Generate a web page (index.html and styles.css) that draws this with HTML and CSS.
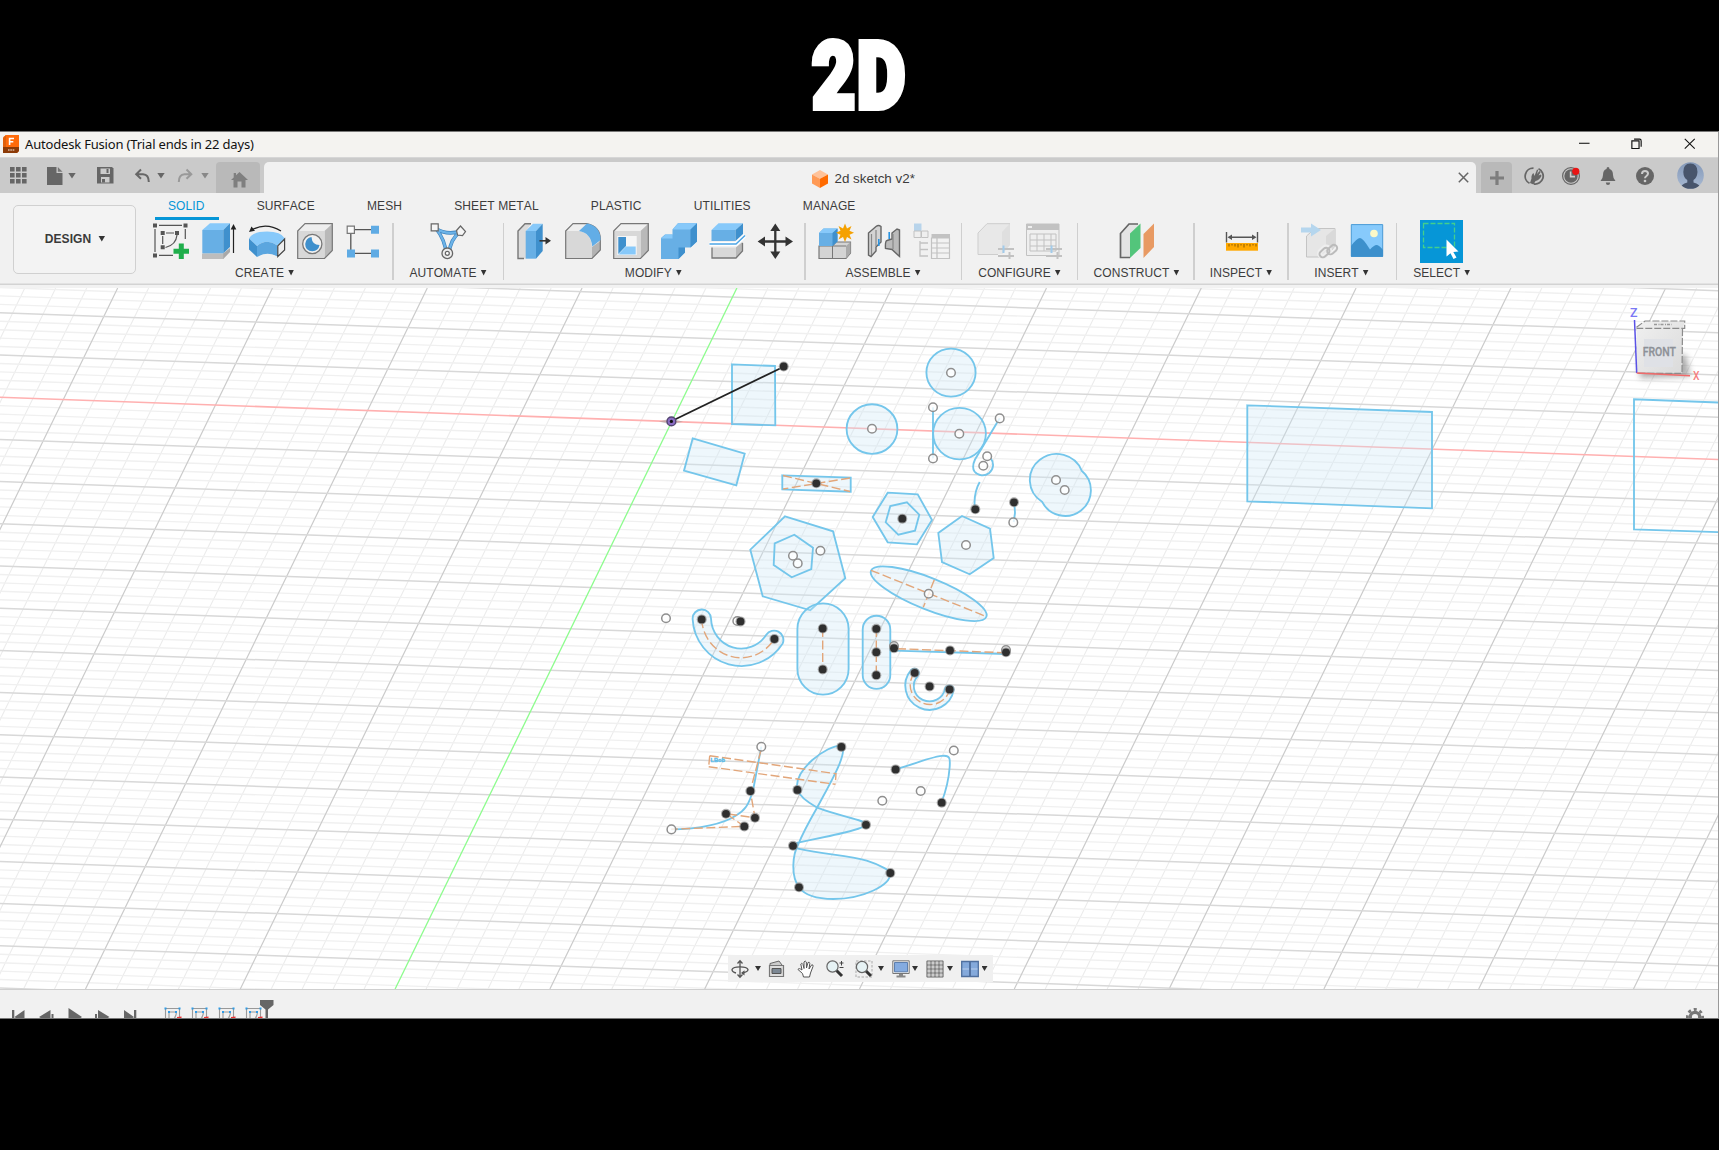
FILE: index.html
```html
<!DOCTYPE html>
<html lang="en">
<head>
<meta charset="utf-8">
<title>Autodesk Fusion</title>
<link rel="stylesheet" href="styles.css">
</head>
<body>
<header class="banner"><h1 class="banner-title">2D</h1></header>
<main class="window">
  <div class="titlebar">
    <svg class="app-logo" viewBox="0 0 16 18"><path d="M1 1.5L3 0H16V16L14 18H0V3z" fill="#ff6b0b"/><path d="M0 12H16V16L14 18H0z" fill="#8c3a06"/><path d="M0 3L3 0V12H0z" fill="#e0600c"/><path d="M6.6 10V3.5H11M6.6 6.7H10.3" stroke="#fff" stroke-width="1.6" fill="none"/><path d="M5 15H12" stroke="#d9b9a4" stroke-width="1.6" stroke-dasharray="1.6 .7"/></svg>
    <span class="app-title">Autodesk Fusion (Trial ends in 22 days)</span>
    <div class="window-buttons">
      <svg viewBox="0 0 12 12"><path d="M0 5.5H11" stroke="#111" stroke-width="1.1"/></svg>
      <svg viewBox="0 0 12 12"><path d="M.9 3H8.4V11H.9z" fill="none" stroke="#111" stroke-width="1.2"/><path d="M3.2 1.2H9Q10.6 1.2 10.6 3V9" fill="none" stroke="#111" stroke-width="1.2"/></svg>
      <svg viewBox="0 0 12 12"><path d="M.8.8L11.2 11.2M11.2.8L.8 11.2" stroke="#111" stroke-width="1.1"/></svg>
    </div>
  </div>

  <div class="tabstrip">
    <div class="quick">
      <svg class="q-apps" viewBox="0 0 17 17" fill="#666"><path d="M0 0h4.6v4.6H0zM6 0h4.6v4.6H6zM12 0h4.6v4.6H12zM0 6h4.6v4.6H0zM6 6h4.6v4.6H6zM12 6h4.6v4.6H12zM0 12h4.6v4.6H0zM6 12h4.6v4.6H6zM12 12h4.6v4.6H12z"/></svg>
      <svg class="q-file" viewBox="0 0 16 18"><path d="M0 0H9.5V6H15.5V18H0z" fill="#666"/><path d="M10.8 0L15.5 4.8H10.8z" fill="#777"/></svg>
      <i class="caret q-c1"></i>
      <svg class="q-save" viewBox="0 0 17 17"><path d="M0 0H15L16.5 1.5V16.5H0z" fill="#666"/><path d="M3.5 1.5H13V7H3.5z" fill="#ccc"/><path d="M9.5 2V6H11.5V2z" fill="#666"/><path d="M4 10H12.5V15.5H4z" fill="#ccc"/><path d="M5 12H8V15.5H5z" fill="#666"/></svg>
      <svg class="q-undo" viewBox="0 0 16 14"><path d="M6 .5L1.2 5.2L6 9.8M1.5 5.2H8Q13.8 5.5 13.8 13" fill="none" stroke="#666" stroke-width="2"/></svg>
      <i class="caret q-c2"></i>
      <svg class="q-redo" viewBox="0 0 16 14"><path d="M9.5 .5L14.3 5.2L9.5 9.8M14 5.2H7.5Q1.8 5.5 1.8 13" fill="none" stroke="#999" stroke-width="2"/></svg>
      <i class="caret q-c3"></i>
    </div>
    <div class="home-tab"><svg viewBox="0 0 17 16"><path d="M8.5 0L17 8H14.5V15.5H10.5V9.5H6.5V15.5H2.5V8H0L2.7 5.4V1H5V3.3z" fill="#7f7f7f"/></svg></div>
    <div class="doc-tab">
      <svg class="doc-cube" viewBox="0 0 16 18"><path d="M8 0L16 4.4L8 8.8L0 4.4z" fill="#ffc299"/><path d="M0 4.4L8 8.8V18L0 13.6z" fill="#ff9a55"/><path d="M16 4.4L8 8.8V18L16 13.6z" fill="#ff6a00"/></svg>
      <span>2d sketch v2*</span>
      <svg class="doc-close" viewBox="0 0 11 11"><path d="M.8.8L10.2 10.2M10.2.8L.8 10.2" stroke="#666" stroke-width="1.5"/></svg>
    </div>
    <div class="new-tab"><svg viewBox="0 0 14 14"><path d="M7 0V14M0 7H14" stroke="#7d7d7d" stroke-width="3.2"/></svg></div>
    <div class="account">
      <svg class="a-ic" viewBox="0 0 18 18"><path d="M4.500 16.300A8 8 0 0 1 8.500 1.200M13.500 1.800A8 8 0 0 1 9 17" fill="none" stroke="#666" stroke-width="1.800"/><path d="M5 16L6.500 11.500Q6 8 8.500 6L9.500 9L12 2.500L13.200 3L12 7L14.500 4L15.700 5L13.500 8.500L16 7.500L16.500 9Q14 13.500 10.500 14L8.500 17.500z" fill="#666"/></svg>
      <svg class="a-ic" viewBox="0 0 18 18"><circle cx="9" cy="9" r="8.4" fill="none" stroke="#666" stroke-width="1.2"/><circle cx="9" cy="9" r="6.7" fill="#666"/><path d="M8.6 4.5V9.6H13" stroke="#ccc" stroke-width="1.6" fill="none"/><circle cx="13.8" cy="4.3" r="3.6" fill="#e81414"/></svg>
      <svg class="a-ic" viewBox="0 0 18 18"><path d="M9 0Q10.5 0 10.5 2Q14 3 14 8Q14 11.5 16.5 14H1.5Q4 11.5 4 8Q4 3 7.5 2Q7.5 0 9 0zM6.8 15.5H11.2Q11 18 9 18Q7 18 6.8 15.5z" fill="#666"/></svg>
      <svg class="a-ic" viewBox="0 0 18 18"><circle cx="9" cy="9" r="9" fill="#666"/><path d="M6 7Q6 4 9 4Q12 4 12 6.6Q12 8 10.5 9Q9 10 9 11.3" fill="none" stroke="#ccc" stroke-width="2"/><circle cx="9" cy="14" r="1.3" fill="#ccc"/></svg>
      <svg class="avatar" viewBox="0 0 27 27"><defs><clipPath id="av"><circle cx="13.5" cy="13.5" r="13.3"/></clipPath><linearGradient id="avg" x2="0" y2="1"><stop stop-color="#8398b8"/><stop offset="1" stop-color="#a9bad3"/></linearGradient></defs><g clip-path="url(#av)"><path d="M0 0H27V27H0z" fill="url(#avg)"/><path d="M13.3 1.5Q20.5 1.5 20.5 10Q20 16 16.5 18V20.5Q23 22 24.5 27H2.5Q4 22 10.3 20.5V18Q6.5 16 6.3 10Q6.3 1.5 13.3 1.5z" fill="#48556c"/></g></svg>
    </div>
  </div>

  <section class="ribbon">
    <button class="design">DESIGN <i class="caret"></i></button>
    <div class="ribbon-main">
      <nav class="ribbon-tabs"><span class="active">SOLID</span><span>SURFACE</span><span>MESH</span><span>SHEET METAL</span><span>PLASTIC</span><span>UTILITIES</span><span>MANAGE</span></nav>
      <div class="groups">
        <div class="group g-create"><div class="icons">
          <svg viewBox="0 0 36 40"><path d="M6 4.3H29M2 8V31M6 34.3H20M32.3 8V18M13 12H21M9.7 15V23M24 14Q23 24 12.5 26.5" stroke="#555" stroke-width="1.2" fill="none"/><path d="M0 2.5h4v4H0zM30.5 2.5h4v4h-4zM0 32.5h4v4H0zM7.7 10h4v4h-4zM22 10h4v4h-4zM7.7 24.3h4v4h-4z" fill="#555"/><path d="M28.3 22.5V38M20.5 30.3H36" stroke="#1fae4b" stroke-width="5"/></svg>
          <svg viewBox="0 0 36 40"><path d="M1.3 32.5H22L29 27V31L22.3 38H1.3z" fill="#a8a8a8"/><path d="M1.3 33H22.3V38H1.3z" fill="#bdbdbd"/><path d="M1.3 9L9 2.3H29L22.3 9z" fill="#87c9fa"/><path d="M1.3 9H22.3V32.3H1.3z" fill="#67afe5"/><path d="M22.3 9L29 2.3V26L22.3 32.3z" fill="#3f90cd"/><path d="M32.5 7V32" stroke="#222" stroke-width="1.2"/><path d="M32.5 3L35.3 8.5H29.7z" fill="#222"/></svg>
          <svg viewBox="0 0 36 40"><path d="M2.5 9Q17 .8 32 10" fill="none" stroke="#222" stroke-width="1.2"/><path d="M0 11L2.5 5.6L6 9.8z" fill="#222"/><path d="M0 17.500Q4 10.500 18 10.500Q32 10.500 36 17.500L28.5 24.5Q18 17 8 25z" fill="#87c9fa"/><path d="M8 25Q18 17 28.5 24.5V35.5Q18 30 8 36z" fill="#5ba6df"/><path d="M0 17.500L8 25V36L0 28.5z" fill="#3f90cd"/><path d="M28.8 24.8L35.6 18V29L28.8 35.5z" fill="#eee" stroke="#444" stroke-width="1.2"/></svg>
          <svg viewBox="0 0 36 40"><path d="M.7 10L8 2.7H35.3V29.5L27.5 37.5H.7z" fill="#eee"/><path d="M27.5 10L35.3 2.7V29.5L27.5 37.5z" fill="#b9b9b9"/><path d="M.7 10H27.5V37.5H.7z" fill="#d8d8d8"/><path d="M.7 10L8 2.7H35.3V29.5L27.5 37.5H.7z" fill="none" stroke="#777" stroke-width="1.2"/><circle cx="15.3" cy="23" r="9.6" fill="#f2f2f2" stroke="#777" stroke-width="1.3"/><path d="M14.5 16Q15 24 22.5 24Q21.5 30 15.3 30.2Q8.2 30 8.2 23Q8.8 17 14.5 16z" fill="#3f90cd"/></svg>
          <svg viewBox="0 0 36 40"><path d="M10 8.7H26M5.8 13V29M10 32.3H26" stroke="#555" stroke-width="1.3"/><path d="M2.2 5.1h7.2v7.2H2.2z" fill="#fafafa" stroke="#777" stroke-width="1.2"/><path d="M26 4.8h8v8h-8zM2 28.4h8v8H2zM26 28.4h8v8h-8z" fill="#5fabe4"/></svg>
        </div><div class="label">CREATE<i class="caret"></i></div></div>
        <div class="group g-auto"><div class="icons">
          <svg viewBox="0 0 36 40"><path d="M5 6Q16 20 16 33M31 10Q20 18 19 33M5 7Q17 15 31 10" fill="none" stroke="#3b82bd" stroke-width="3.6"/><path d="M5 6Q16 20 16 33M31 10Q20 18 19 33M5 7Q17 15 31 10" fill="none" stroke="#6cb3e8" stroke-width="2.2"/><path d="M1.2 2.8h7v7h-7z" fill="#f5f5f5" stroke="#666" stroke-width="1.2"/><path d="M26.5 9.5L30.5 5L35.5 10.5L32.5 14.5L27.5 14z" fill="#f5f5f5" stroke="#666" stroke-width="1.2"/><circle cx="17.3" cy="32.3" r="5.3" fill="#eee" stroke="#666" stroke-width="1.3"/><circle cx="17.3" cy="32.3" r="2" fill="#fff" stroke="#666" stroke-width="1.2"/></svg>
        </div><div class="label">AUTOMATE<i class="caret"></i></div></div>
        <div class="group g-modify"><div class="icons">
          <svg viewBox="0 0 36 40"><path d="M1 10L8 2.7H14L9 10V37.5H1z" fill="#dcdcdc"/><path d="M14 2.7H8L1 10V37.5H7" fill="none" stroke="#777" stroke-width="1.4"/><path d="M8.7 10L16 2.7H25.7L19 10z" fill="#87c9fa"/><path d="M8.7 10H19V37.7H8.7z" fill="#67afe5"/><path d="M19 10L25.7 2.7V30L19 37.7z" fill="#3f90cd"/><path d="M22.5 19.8H29" stroke="#333" stroke-width="1.6"/><path d="M28.5 16L34 19.8L28.5 23.6z" fill="#333"/></svg>
          <svg viewBox="0 0 36 40"><path d="M.7 10L8 2.7H22Q35.3 6 35.3 18V29L27 37.5H.7z" fill="#eee"/><path d="M.7 10H14Q26 12 27 26V37.5H.7z" fill="#d8d8d8"/><path d="M27 26L35.3 20V29L27 37.5z" fill="#b3b3b3"/><path d="M.7 10L8 2.7H22Q35.3 6 35.3 18V29L27 37.5H.7z" fill="none" stroke="#777" stroke-width="1.2"/><path d="M14 10L22 2.4Q35.6 5 35.6 19L27.3 25.5Q26 12 14 10z" fill="#62ade6"/></svg>
          <svg viewBox="0 0 36 40"><path d="M.7 10L8 2.7H35.3V29.5L27.5 37.5H.7z" fill="#f0f0f0"/><path d="M27.5 10L35.3 2.7V29.5L27.5 37.5z" fill="#b9b9b9"/><path d="M.7 10H27.5V37.5H.7z" fill="#d8d8d8"/><path d="M.7 10L8 2.7H35.3V29.5L27.5 37.5H.7z" fill="none" stroke="#777" stroke-width="1.2"/><path d="M4.3 15H23.7V34H4.3z" fill="#f6f6f6"/><path d="M5.3 16H13V25L5.3 33z" fill="#3f90cd"/><path d="M5.3 33.5L13 25.5H22.7V33.5z" fill="#87c9fa"/></svg>
          <svg viewBox="0 0 36 40"><path d="M0 17L4 13.5H11.5V8.5L17 2.3H36V20.5L29.5 26.5H24V31.5L17.5 38H0z" fill="#67afe5"/><path d="M11.5 8.5L17 2.3H36L29.5 8.5zM0 17.5L4.5 13.5H11.5V17.5z" fill="#87c9fa"/><path d="M29.5 8.5L36 2.3V20.5L29.5 26.5zM17.5 26.5H24V31.5L17.5 38z" fill="#3f90cd"/></svg>
          <svg viewBox="0 0 36 40"><path d="M2.5 9L9.5 2.3H34L26.5 9z" fill="#87c9fa"/><path d="M2.5 9H26.5V20H2.5z" fill="#67afe5"/><path d="M26.5 9L34 2.3V13L26.5 20z" fill="#3f90cd"/><path d="M3 26.5H27L33.5 21V30L27 37H3z" fill="#d8d8d8"/><path d="M27 26.5L33.5 21V30L27 37z" fill="#b9b9b9"/><path d="M3 26.5V37H27L33.5 30V22" fill="none" stroke="#777" stroke-width="1.3"/><path d="M.5 23H27L36 14.5" fill="none" stroke="#fff" stroke-width="4"/><path d="M.5 23H27L36 14.5" fill="none" stroke="#4ea6e6" stroke-width="1.5"/></svg>
          <svg viewBox="0 0 36 40"><path d="M18.3 7V34M5 20.5H31" stroke="#333" stroke-width="2.3"/><path d="M18.3 2.5L23.3 10H13.3zM18.3 38L23.3 30.5H13.3zM.6 20.5L8 15.5V25.5zM36 20.5L28.5 15.5V25.5z" fill="#333"/></svg>
        </div><div class="label">MODIFY<i class="caret"></i></div></div>
        <div class="group g-assemble"><div class="icons">
          <svg viewBox="0 0 36 40"><path d="M1 25H14.5L18 21H32.5V32L28 37.5H1z" fill="#d4d4d4" stroke="#777" stroke-width="1.2"/><path d="M28 25L32.5 21V32L28 37.5z" fill="#aaa"/><path d="M14.5 25H28M14.5 25V37.5" stroke="#777"/><path d="M1 12L5.5 7.5H19.5V20.5L14.5 25H1z" fill="#67afe5"/><path d="M1 12L5.5 7.5H19.5L14.5 12z" fill="#87c9fa"/><path d="M14.5 12L19.5 7.5V20.5L14.5 25z" fill="#3f90cd"/><path d="M27 2.5L29 7.5L33.5 5L31.5 9.7L36 11.7L31.5 13.7L33.5 18.5L29 16L27 21L25 16L20.5 18.5L22.5 13.7L18 11.7L22.5 9.7L20.5 5L25 7.5z" fill="#f5a100"/></svg>
          <svg viewBox="0 0 36 40"><path d="M2.5 12L10 5.500Q12.500 3.500 15 5.500V21L10 26V30L5 35.500L2.500 34z" fill="#d4d4d4" stroke="#666" stroke-width="1.4"/><path d="M5.500 13V34M10 9V25" stroke="#888" stroke-width="1.2"/><path d="M33.500 9L31 8L26 12V18L21 19.500Q19 20 19.500 27.500L26 28.500L33.500 35.500z" fill="#bbb" stroke="#666" stroke-width="1.4"/><path d="M27 13V28" stroke="#888" stroke-width="1.200"/><path d="M12.800 18V25M23.200 11V18" stroke="#2a93e0" stroke-width="1.6"/></svg>
          <svg class="dim" viewBox="0 0 36 40"><path d="M0 2.5h7.5V10H0z" fill="#9ac6e8"/><path d="M0 10h7v6.5H0zM7.5 10h6.500v6.500H7.500z" fill="#eee" stroke="#aaa"/><path d="M6 20V35H14M6 22H14M6 28.500H14" fill="none" stroke="#aaa" stroke-width="1.300"/><path d="M17.500 13H36V17H17.500z" fill="#aaa"/><path d="M17.500 17H35.500V37.500H17.500zM17.500 22H35.500M17.500 27H35.500M17.500 32H35.500M23 17V37.500" fill="#f3f3f3" stroke="#aaa" stroke-width="1.200"/></svg>
        </div><div class="label">ASSEMBLE<i class="caret"></i></div></div>
        <div class="group g-configure"><div class="icons">
          <svg class="dim" viewBox="0 0 36 40"><path d="M0 12L9 2.500H32V24L24 33H0z" fill="#e4e4e4"/><path d="M24 11L32 2.500V24L24 33z" fill="#d6d6d6"/><path d="M20 33.500H0V12L9 2.700H32" fill="none" stroke="#bbb" stroke-width="1"/><path d="M20 28H36M20 35H36M31.500 31V38" stroke="#aaa" stroke-width="2"/><path d="M25.500 24.500V32" stroke="#79b8e8" stroke-width="2"/></svg>
          <svg class="dim" viewBox="0 0 36 40"><path d="M.5 3H33V34.500H.5z" fill="#eee" stroke="#aaa"/><path d="M.5 3H33V9H.5z" fill="#aaa"/><path d="M2 5h4v2H2z" fill="#eee"/><path d="M4 13H30V30H4zM4 19H30M4 25H30M11 13V30M18 13V30M25 13V25" fill="none" stroke="#aaa"/><path d="M20 28H36M20 35H36M31.500 31V38" stroke="#aaa" stroke-width="2"/><path d="M25.500 24.500V32" stroke="#79b8e8" stroke-width="2"/></svg>
        </div><div class="label">CONFIGURE<i class="caret"></i></div></div>
        <div class="group g-construct"><div class="icons">
          <svg viewBox="0 0 36 40"><path d="M1.500 12.500L10 3H20L12 12.500V36.500H1.500z" fill="#e4e4e4"/><path d="M19 3H10L1.500 12.500V36.500H11" fill="none" stroke="#666" stroke-width="1.700"/><path d="M11 12.500L21.500 2.500V27L11 37z" fill="#53c57b"/><path d="M24.500 13L35 2.500V26L24.500 37z" fill="#e89a63"/></svg>
        </div><div class="label">CONSTRUCT<i class="caret"></i></div></div>
        <div class="group g-inspect"><div class="icons">
          <svg viewBox="0 0 36 40"><path d="M2.500 11V21.500M33.500 11V21.500M6 16.300H30" stroke="#555" stroke-width="1.400"/><path d="M3.500 16.300L8 13.500V19zM32.500 16.300L28 13.500V19z" fill="#555"/><path d="M2 22H34V29.700H2z" fill="#ffa800"/><path d="M5 23V25.500M8 23V24.500M11 23V25.500M14 23V26.500M17 23V24.500M20 23V26.500M23 23V24.500M26 23V25.500M29 23V24.500M32 23V25.500" stroke="#8a5a00"/></svg>
        </div><div class="label">INSPECT<i class="caret"></i></div></div>
        <div class="group g-insert"><div class="icons">
          <svg viewBox="0 0 36 40"><path d="M5.500 15L14 7.500H34V25L25 36H5.500z" fill="#e6e6e6" stroke="#c4c4c4"/><path d="M25 15L34 7.500V25L25 36z" fill="#d9d9d9"/><path d="M0 6.500H10V2.500L20 9L10 15.500V11.500H0z" fill="#b5d6ee"/><g fill="none" stroke="#eee" stroke-width="5"><rect x="18" y="28" width="11" height="6.500" rx="3.200" transform="rotate(-42 23 31)"/></g><g fill="none" stroke="#bbb" stroke-width="2"><rect x="17.500" y="28.500" width="11" height="6.500" rx="3.200" transform="rotate(-42 23 31)"/><rect x="25" y="26" width="11" height="6.500" rx="3.200" transform="rotate(-42 30 28)"/></g></svg>
          <svg viewBox="0 0 36 40"><path d="M2.300 3.600H33.700V35.400H2.300z" fill="#87cafc" stroke="#4a9bd6"/><path d="M2 25Q8 17 11 17Q14 17 21 28.500Q25 24 27.500 24Q30 24 34 29V35.700H2z" fill="#3d90cc"/><circle cx="25" cy="12.500" r="3.800" fill="#fdf9c8"/></svg>
        </div><div class="label">INSERT<i class="caret"></i></div></div>
        <div class="group g-select"><div class="icons">
          <svg class="select-tile" viewBox="0 0 43 43"><path d="M0 0H43V43H0z" fill="#0696d7"/><path d="M3.500 3.500H34.500V27.500H3.500z" fill="none" stroke="#43cf8c" stroke-width="1.300" stroke-dasharray="5 2"/><path d="M26.500 19.500L38.500 31.500L33.300 32L36.500 37.500L33.500 39L30.500 33.300L26.500 36.500z" fill="#fff"/></svg>
        </div><div class="label">SELECT<i class="caret"></i></div></div>
      </div>
    </div>
  </section>

  <section class="viewport">
    <svg class="scene" viewBox="0 288 1719 701">
      <defs>
        <g id="f"><circle r="5" fill="#8d8d8d" opacity=".75"/><circle r="3.900" fill="#2f2f2f"/></g>
        <circle id="o" r="4.300" fill="#fff" fill-opacity=".8" stroke="#8f8f8f" stroke-width="1.500"/>
      </defs>
      <path id="grid-minor-x" class="minor"/><path id="grid-minor-y" class="minor minor-y"/>
      <path id="grid-major-x" class="major"/><path id="grid-major-y" class="major major-y"/>
      <path d="M0 397.200L1719 459.500" stroke="#ffb0b0" stroke-width="1.600"/>
      <path d="M736.900 288L395.100 989" stroke="#8dfc8d" stroke-width="1.300"/>
      <g class="shape">
        <path d="M732 364.300L775 366L775.300 425.300L732 424z"/>
        <path d="M692.700 438.300L744.700 453.700L736.300 485.300L684 470.700z"/>
        <path d="M782.300 475.300L850.700 477.700V491.700L782.300 489.300z"/>
        <ellipse cx="872" cy="429" rx="25.400" ry="24.800"/>
        <ellipse cx="951" cy="372.600" rx="24.600" ry="24"/>
        <ellipse cx="959.500" cy="433.600" rx="26.400" ry="25.800"/>
        <path d="M1081.700 470.700A26.800 26 0 1 0 1042 501.700A25.800 25.600 0 1 0 1081.700 470.700z"/>
        <path d="M887.700 492.700L917.700 494.300L932 520L917 544.300L887.700 542.300L872.700 517z"/>
        <path class="hollow" d="M907 502.300L919.300 514.700L915 530.700L898.300 534.700L885.700 522.300L890.300 506z"/>
        <path d="M962 516L990 528.700L993.700 558L969.700 574.300L942 562L938.300 533z"/>
        <path d="M785 516.300L833 531.300L845.300 578.300L810.300 610.300L762.700 596.300L750.300 549.700z"/>
        <path class="hollow" d="M794.300 534.700L813 547.700L811.300 569L791.700 577.300L773.700 565L774.700 543.300z"/>
        <ellipse cx="928.700" cy="593.700" rx="62.100" ry="15.800" transform="rotate(21.800 928.700 593.700)"/>
        <path d="M692.600 618.800A49 49.500 0 0 0 782.700 643.400A9.300 9.300 0 0 0 766.300 634.800A30.200 31 0 0 1 711 618.500A9.200 9.200 0 0 0 692.600 618.800z"/>
        <rect x="797.400" y="603.400" width="51.200" height="91.200" rx="25.600"/>
        <rect x="862.700" y="615.700" width="27.600" height="73.200" rx="13.800"/>
        <path d="M911 670.100A24.400 24.200 0 1 0 953.700 689.900A4.500 4.500 0 0 0 945 688.600A15.700 15.200 0 1 1 917.800 676A4.500 4.500 0 0 0 911 670.100z"/>
        <path d="M1247.300 405.300L1432 412V508.300L1247.300 501.300z"/>
        <path class="hollow" d="M1725 402.800L1634 399.300V529.300L1725 532.300"/>
        <path class="hollow" d="M933 407.300V458.300M999.700 418.300L975 459.500Q971.500 467 974.500 471.500A10.400 10.400 0 1 0 990.700 458.300M979.700 482Q973 494 975 509.300M1014.300 502L1015 513L1013.700 522"/>
        <path d="M894 650.700L1006 654" class="hollow"/>
        <path d="M841.300 745.600C826.700 745 793.300 770 797.300 789.700C800 798.300 816.700 807.300 817.300 807.700C840 816.700 867 820 866 824.700C865.300 829.300 826.700 836.700 797.300 842.700Q793 845.700 798 848.700C826.700 855 846.700 855 866.700 860.700C880 865 890.300 870.700 890.300 873C891.300 885 863.300 899 833.300 899C813.300 899 803.300 893.300 799 887.300C790 875 793.300 853.300 798 845C803.300 831.700 810 820 817.300 807.300C830 783.300 849 751.700 841.300 745.600z" fill-rule="evenodd"/>
        <path class="hollow" d="M761.300 746.700L753.500 788C749 806 744 811 736 815.500C724 823.500 700 829.300 671.300 829.300"/>
        <path class="hollow" d="M895.700 769.300C916.700 763.300 933.300 756 944 755.700C950.700 755.700 950 760 949.700 766.700C948.700 780 945 793.300 941.700 802"/>
      </g>
      <g class="construction">
        <path d="M783 475.500L850 491.500M850 478L783 489M871 570.300L986.700 616.700M934.300 579.700L923.300 607.300M701.700 619.300A39.400 40.500 0 0 0 774.300 639M822.700 628V669M876.300 628V675M897 648.700L1004 652.700M914.700 672.700A20 19.500 0 1 0 949.700 689.300M761 750L750.300 791L755 817.700L726 813.700L744.300 826.300L671.300 829.300M709.700 755.700L836 773.700L835.300 784.300M708.700 766.700L835.300 784.300M709.700 755.700L708.700 766.700"/>
      </g>
      <text x="710.500" y="762" class="tiny" textLength="14.500" lengthAdjust="spacingAndGlyphs">LBob</text>
      <path d="M659 421.500L671 418.500L683 421.800L671 424.500z" fill="#999" opacity=".5"/>
      <path d="M671.300 421.300L783.700 366.700" stroke="#222" stroke-width="1.800"/>
      <circle cx="671.400" cy="421.400" r="4.400" fill="#8a6cc4" stroke="#51446e" stroke-width="1.400"/><circle cx="671.400" cy="421.400" r="1.600" fill="#111"/>
      <g>
        <use href="#f" x="783.700" y="366.500"/><use href="#f" x="816.300" y="483.300"/><use href="#f" x="975.300" y="509.300"/><use href="#f" x="1014" y="502.300"/><use href="#f" x="902.300" y="518.700"/>
        <use href="#o" x="872" y="428.700"/><use href="#o" x="951" y="372.700"/><use href="#o" x="959.300" y="433.700"/><use href="#o" x="933" y="407.300"/><use href="#o" x="933" y="458.500"/><use href="#o" x="999.700" y="418.400"/><use href="#o" x="987.200" y="456.200"/><use href="#o" x="983.300" y="465.700"/><use href="#o" x="1056" y="480"/><use href="#o" x="1064.700" y="490"/><use href="#o" x="1013.300" y="522.400"/><use href="#o" x="966" y="545"/>
        <use href="#o" x="793" y="555.800"/><use href="#o" x="797.700" y="563.400"/><use href="#o" x="820.400" y="550.700"/><use href="#o" x="928.700" y="593.700"/><use href="#o" x="666" y="618.200"/><use href="#o" x="737.300" y="621"/><use href="#f" x="740.500" y="621.400"/>
        <use href="#f" x="701.700" y="619.400"/><use href="#f" x="774.400" y="639"/><use href="#f" x="822.700" y="628.500"/><use href="#f" x="822.700" y="669.400"/><use href="#f" x="876.300" y="628.800"/><use href="#f" x="876.300" y="652.200"/><use href="#f" x="876.300" y="675.200"/>
        <use href="#o" x="894" y="646"/><use href="#f" x="894" y="648.200"/><use href="#f" x="950" y="650.400"/><use href="#o" x="1006" y="650"/><use href="#f" x="1006" y="652.300"/>
        <use href="#f" x="914.700" y="672.800"/><use href="#f" x="929.600" y="686.400"/><use href="#f" x="949.600" y="689.400"/>
        <use href="#o" x="761.300" y="746.800"/><use href="#f" x="750.400" y="791"/><use href="#f" x="755" y="817.800"/><use href="#f" x="726" y="813.800"/><use href="#f" x="744.300" y="826.400"/><use href="#o" x="671.400" y="829.400"/>
        <use href="#f" x="841.400" y="746.900"/><use href="#f" x="797.400" y="789.900"/><use href="#f" x="866" y="824.800"/><use href="#f" x="793" y="845.800"/><use href="#f" x="890.300" y="873"/><use href="#f" x="799" y="887.300"/>
        <use href="#f" x="895.600" y="769.400"/><use href="#f" x="941.700" y="802.700"/><use href="#o" x="953.800" y="750.500"/><use href="#o" x="920.700" y="791"/><use href="#o" x="882.300" y="800.700"/>
      </g>
    </svg>

    <svg class="cube" viewBox="1620 300 90 90">
      <defs><filter id="soft" x="-30%" y="-30%" width="160%" height="160%"><feGaussianBlur stdDeviation="3"/></filter><linearGradient id="cg" x2="1" y2="1"><stop stop-color="#f0f0f0"/><stop offset="1" stop-color="#dadada"/></linearGradient></defs>
      <path d="M1640 355H1686L1690 376L1640 378z" fill="#666" opacity=".55" filter="url(#soft)"/>
      <path d="M1636.500 327.500L1645 321H1684.700L1683 329L1682 373.300L1636.700 372.500z" fill="url(#cg)"/>
      <path d="M1644 339H1673V367H1644z" fill="#dfe1e6"/>
      <path d="M1636.500 327.300L1645 321H1684.700V328.300H1636.500M1682.500 329L1682 373.300H1637" fill="none" stroke="#8b8b8b" stroke-width="1.200" stroke-dasharray="7 2"/>
      <path d="M1654 324.500H1672" stroke="#999" stroke-width="1.500" stroke-dasharray="3 1.500 1 1"/>
      <path d="M1634.500 320L1636.700 373" stroke="#5a52e6" stroke-width="1.500"/><path d="M1636.700 373L1690 375.700" stroke="#f06a6a" stroke-width="1.500"/>
      <text x="1642.700" y="356" class="face" textLength="33.300" lengthAdjust="spacingAndGlyphs">FRONT</text>
      <text x="1630" y="317" class="axis-z">Z</text><text x="1693" y="380" class="axis-x" textLength="6.500" lengthAdjust="spacingAndGlyphs">X</text>
    </svg>

    <div class="navbar">
      <svg viewBox="0 0 18 18"><path d="M9 1V17M6.500 3.500L9 .8L11.500 3.500M6.500 14.500L9 17.200L11.500 14.500" fill="none" stroke="#555" stroke-width="1.300"/><path d="M5 13Q1 12 1 9.500Q2 6.800 9 6.800Q16 6.800 17 9.500Q17 12 11 13" fill="none" stroke="#555" stroke-width="1.300"/><path d="M13.500 10.300L10 13L13.500 15.500z" fill="#555"/></svg><i class="caret n1"></i>
      <svg class="n2" viewBox="0 0 18 18"><path d="M2 5V3.500L11 1L14 5" fill="#ccc" stroke="#666"/><path d="M1.500 5.500H15.500V16.500H1.500z" fill="#ddd" stroke="#777" stroke-width="1.200"/><path d="M4 8.500H13V13.500H4z" fill="#7c8894" stroke="#555"/></svg>
      <svg class="n3" viewBox="0 0 18 18"><path d="M6.500 17L5.500 13.500L1 9.500Q1.500 7.500 5 10L3.800 4Q4.500 2 6 4.500L7 8.500L7 2Q8.200 0 9.300 2L9.500 8L11 2.500Q12.500 1.500 12.800 3.500L12 9L14.700 4.800Q16.500 4.500 16 6.500L13.500 13L12.500 17z" fill="#fff" stroke="#555"/></svg>
      <svg class="n3" viewBox="0 0 18 18"><path d="M10.500 10.500L16 16" stroke="#333" stroke-width="3"/><circle cx="6.500" cy="6.500" r="5.600" fill="#e6f2f4" stroke="#666" stroke-width="1.200"/><path d="M13.500 3H17.500M15.500 1V5.500M13.500 7.500H17.500" stroke="#444"/></svg>
      <svg class="n3" viewBox="0 0 18 18"><path d="M1 1H17V17H1z" fill="none" stroke="#aaa" stroke-dasharray="2.500 1.500"/><path d="M10.500 10.500L16 16" stroke="#333" stroke-width="3"/><circle cx="7" cy="7" r="5.600" fill="#e6f2f4" stroke="#666" stroke-width="1.200"/></svg><i class="caret n4"></i>
      <svg class="n5" viewBox="0 0 18 18"><path d="M.8 .8H17.200V13.500H.8z" fill="#eee" stroke="#777"/><path d="M2.500 2.500H15.500V11.800H2.500z" fill="#84abe0" stroke="#5d7fae"/><path d="M7 14H11V15.500H13.500V17.500H4.500V15.500H7z" fill="#888"/></svg><i class="caret n6"></i>
      <svg class="n5" viewBox="0 0 18 18"><path d="M1 1H17V17H1z" fill="#f3f3f3"/><path d="M.8 1H17.200M.8 5H17.200M.8 9H17.200M.8 13H17.200M.8 17H17.200M1 1V17M5 1V17M9 1V17M13 1V17M17 1V17" stroke="#666" stroke-width="1.100"/><path d="M3 1V17M7 1V17M11 1V17M15 1V17M1 3H17M1 7H17M1 11H17M1 15H17" stroke="#999" stroke-width=".5"/></svg><i class="caret n7"></i>
      <svg class="n8" viewBox="0 0 18 18"><path d="M.7 1.500H8.700V16.500H.7zM9.300 1.500H17.300V16.500H9.300z" fill="#84a9db" stroke="#4f6f9e" stroke-width="1.300"/><path d="M1.500 9H8M10 9H16.500" stroke="#b8cdec"/></svg><i class="caret n7"></i>
    </div>
  </section>

  <footer class="timeline">
    <div class="playback">
      <svg viewBox="0 0 16 18"><path d="M1 2H3.300V16H1zM13.500 2V16L3.500 9z" fill="#666"/></svg>
      <svg viewBox="0 0 16 18"><path d="M11.500 2V16L0 9zM12.500 6H14.500V14H12.500z" fill="#666"/></svg>
      <svg viewBox="0 0 16 18"><path d="M1.500 0L15 9L1.500 18z" fill="#666"/></svg>
      <svg viewBox="0 0 16 18"><path d="M3 2V16L14.500 9zM0 6H2V14H0z" fill="#666"/></svg>
      <svg viewBox="0 0 16 18"><path d="M1 2V16L11 9zM11 2H13.300V16H11z" fill="#666"/></svg>
    </div>
    <div class="features">
      <svg viewBox="0 0 18 18"><use href="#feat"/></svg><svg viewBox="0 0 18 18"><use href="#feat"/></svg><svg viewBox="0 0 18 18"><use href="#feat"/></svg><svg viewBox="0 0 18 18"><g id="feat"><path d="M1.500 1.500H15.500V16H1.500zM5 5H12.500Q12 13 5 14z" fill="none" stroke="#999" stroke-width="1.100"/><path d="M.5.500h2v2h-2zM14.500.500h2v2h-2zM4 4h2v2H4zM11 4h2v2h-2z" fill="#2f9be6"/><path d="M13 10L17.500 9.500V14H13z" fill="#e33"/></g></svg>
      <svg class="marker" viewBox="0 0 14 20"><path d="M0 0H13.500V5L8 9.500V20H5.500V9.500L0 5z" fill="#666"/></svg>
    </div>
    <svg class="gear" viewBox="0 0 18 18"><circle cx="9" cy="9" r="4.700" fill="none" stroke="#777" stroke-width="3.200"/><circle cx="9" cy="9" r="7.600" fill="none" stroke="#777" stroke-width="2.800" stroke-dasharray="3 2.970" stroke-dashoffset="1.500"/></svg>
  </footer>
</main>
<script src="grid.js"></script>
</body>
</html>
```
FILE: styles.css
```css
* { box-sizing: border-box; }
body { margin: 0; width: 1719px; height: 1150px; overflow: hidden; background: #000; font-family: "Liberation Sans", Arial, sans-serif; font-size: 12px; color: #3c3c3c; }
svg { display: block; flex: none; overflow: visible; }
.banner { height: 131px; display: flex; justify-content: center; align-items: center; padding-top: 22px; }
.banner-title { margin: 0; color: #fff; font: 900 92px/1 Roboto, sans-serif; letter-spacing: 2px; -webkit-text-stroke: 6px #fff; transform: scaleX(.81); }
.window { height: 888px; display: flex; flex-direction: column; overflow: hidden; background: #f1f1f1; border-top: 1px solid #777; border-right: 1px solid #999; border-bottom: 1px solid #777; }

.titlebar { height: 25px; flex: none; display: flex; align-items: center; padding: 0 23px 2px 3px; background: #f4f3f0; }
.app-logo { width: 16px; height: 18px; margin-top: 1px; }
.app-title { margin-left: 6px; font: 13px/20px "Noto Sans", sans-serif; letter-spacing: -.18px; color: #111; }
.window-buttons { margin-left: auto; display: flex; gap: 41px; }
.window-buttons svg { width: 11.500px; height: 11.500px; }

.tabstrip { height: 36px; flex: none; display: flex; align-items: flex-end; background: #cacaca; border-top: 1px solid #d6d6d6; }
.quick { width: 216px; height: 35px; display: flex; align-items: center; padding-left: 10px; }
.caret { display: block; flex: none; width: 7px; height: 6px; background: #333; clip-path: polygon(0 0, 100% 0, 50% 100%); }
.quick .caret { background: #666; width: 8px; }
.q-apps { width: 17px; height: 17px; }
.q-file { width: 16px; height: 18px; margin-left: 20px; }
.q-c1 { margin-left: 5px; }
.q-save { width: 17px; height: 17px; margin-left: 21px; }
.q-undo { width: 16px; height: 14px; margin-left: 21px; }
.q-c2 { margin-left: 6px; }
.q-redo { width: 16px; height: 14px; margin-left: 12px; }
.quick .q-c3 { margin-left: 8px; background: #888; }
.home-tab { width: 43.500px; height: 31px; margin-right: 4.500px; border-radius: 4px 4px 0 0; background: #b9b9b9; padding: 10px 0 0 15px; }
.home-tab svg { width: 17px; height: 16px; }
.doc-tab { width: 1212px; height: 31px; border-radius: 5px 5px 0 0; background: #f1f1f1; display: flex; align-items: center; padding: 2px 7px 0 548px; font-size: 13.400px; }
.doc-cube { width: 16px; height: 18px; margin-right: 6.500px; }
.doc-close { width: 11px; height: 11px; margin-left: auto; margin-bottom: 2px; }
.new-tab { width: 31.500px; height: 31px; margin-left: 4.500px; border-radius: 4px 4px 0 0; background: #b9b9b9; display: grid; place-items: center; padding-left: 1px; }
.new-tab svg { width: 14px; height: 14px; }
.account { height: 35px; display: flex; align-items: center; margin-left: 13px; gap: 19px; }
.a-ic { width: 18px; height: 18px; }
.avatar { width: 27px; height: 27px; margin-left: 3.500px; }

.ribbon { height: 95px; flex: none; display: flex; border-bottom: 3px solid #f2f2f2; box-shadow: inset 0 -1.500px #d3d3d3; }
.design { width: 123px; height: 69px; margin: 12px 2px 0 13px; display: flex; align-items: center; justify-content: center; gap: 7px; border: 1.500px solid #d0d0d0; border-radius: 5px; background: #f3f3f3; font: bold 12px "Liberation Sans", sans-serif; letter-spacing: .1px; color: #3a3a3a; padding: 0 0 2px 1px; }
.ribbon-main { flex: 1; }
.ribbon-tabs { display: flex; gap: 52.200px; height: 27px; padding: 6px 0 0 30px; line-height: 14px; font-kerning: none; letter-spacing: .1px; }
.ribbon-tabs span { position: relative; height: 20px; white-space: nowrap; }
.ribbon-tabs .active { color: #0696d7; }
.ribbon-tabs .active::after { content: ""; position: absolute; left: -13px; right: -14px; bottom: -.5px; height: 3px; background: #0696d7; }
.groups { display: flex; }
.group { position: relative; height: 65px; display: flex; flex-direction: column; align-items: center; padding-top: 1px; }
.group:not(:last-child)::after { content: ""; position: absolute; right: -1px; top: 3px; height: 57px; width: 1.500px; background: #cfcfcf; }
.icons { display: flex; gap: 12px; height: 45px; align-items: flex-start; }
.icons svg { width: 36px; height: 40px; }
.icons .select-tile { width: 43px; height: 43px; margin-top: -1px; }
.dim { opacity: .65; }
.label { display: flex; align-items: center; gap: 4px; line-height: 14px; height: 14px; font-kerning: none; letter-spacing: .05px; }
.label .caret { width: 6px; margin-top: -1px; }
.g-create { width: 254.700px; } .g-auto { width: 110.800px; } .g-modify { width: 301.200px; } .g-assemble { width: 156.800px; }
.g-configure { width: 116px; } .g-construct { width: 116.500px; } .g-inspect { width: 94px; } .g-insert { width: 108.500px; } .g-select { width: 89px; }
.icons { transform: translateX(1px); }
.g-auto .icons { transform: none; }
.g-create .icons { padding-left: 2px; }
.g-create .label, .g-modify .label, .g-insert .label { margin-right: 1.500px; }
.g-construct .label, .g-select .label { margin-left: 1.500px; }

.viewport { position: relative; height: 701px; flex: none; background: #fff; overflow: hidden; }
.scene { width: 1719px; height: 701px; }
.minor, .major { fill: none; }
.minor { stroke: #ececec; stroke-width: 1.100; }
.minor-y { stroke: #f0f0f0; stroke-width: 1.400; }
.major { stroke: #cbcbcb; stroke-width: 1.200; }
.major-y { stroke: #d8d8d8; stroke-width: 1.500; }
.shape { fill: rgba(203, 232, 246, .33); stroke: #74c6eb; stroke-width: 1.850; }
.shape .hollow { fill: none; }
.construction { fill: none; stroke: #e2a67a; stroke-width: 1.400; stroke-dasharray: 9 3.500; }
.tiny { font: bold 6px "Liberation Sans", sans-serif; fill: #5cbbe8; stroke: #5cbbe8; stroke-width: .4px; }
.cube { position: absolute; left: 1620px; top: 12px; width: 90px; height: 90px; }
.face { font: 500 13px Roboto, sans-serif; fill: #8d9198; stroke: #8d9198; stroke-width: .3px; }
.axis-z { font: 500 12.500px Roboto, sans-serif; fill: #7a78f5; }
.axis-x { font: 500 13px Roboto, sans-serif; fill: #f58080; }
.navbar { position: absolute; left: 728px; top: 667px; width: 265px; height: 27px; padding-left: 3px; display: flex; align-items: center; background: #f0f0f0; }
.navbar svg { width: 18px; height: 18px; }
.navbar .caret { width: 6px; height: 5px; }
.navbar .n1 { margin-left: 6px; } .n2 { margin-left: 7px; } .n3 { margin-left: 11px; } .navbar .n4 { margin-left: 5px; }
.n5 { margin-left: 8px; } .navbar .n6 { margin-left: 2px; } .navbar .n7 { margin-left: 3px; } .n8 { margin-left: 7.500px; }

.timeline { height: 29px; flex: none; display: flex; align-items: flex-start; border-top: 1px solid #cfcfcf; padding: 0 14px 0 11px; }
.playback { display: flex; gap: 12px; padding-top: 18px; }
.playback svg { width: 16px; height: 18px; }
.features { display: flex; gap: 9px; padding: 17px 0 0 28px; margin-left: -3px; }
.features svg { width: 18px; height: 18px; }
.features .marker { width: 14px; height: 20px; margin: -7px 0 0 -12px; }
.gear { width: 18px; height: 18px; margin: 18px 0 0 auto; }
```
FILE: grid.js
```js
// Ground plane grid: an orthographic lattice around the sketch origin.
(function () {
  var top = 288, bottom = 989, width = 1719;
  var axisSlope = 62.3 / 1719, lean = -341.8 / 701;
  var stepX = 154.8 / 5, stepY = 42.2 / 5;
  var paths = { majorX: "", minorX: "", majorY: "", minorY: "" };
  var i, x, y;
  for (i = -30; i <= 60; i++) {
    if (i === 0) continue;
    x = 736.9 + i * stepX;
    paths[i % 5 ? "minorX" : "majorX"] += "M" + x + " " + top + "L" + (x + lean * (bottom - top)) + " " + bottom;
  }
  for (i = -25; i <= 75; i++) {
    if (i === 0) continue;
    y = 397.2 + i * stepY;
    paths[i % 5 ? "minorY" : "majorY"] += "M0 " + y + "L" + width + " " + (y + axisSlope * width);
  }
  document.getElementById("grid-minor-x").setAttribute("d", paths.minorX);
  document.getElementById("grid-major-x").setAttribute("d", paths.majorX);
  document.getElementById("grid-minor-y").setAttribute("d", paths.minorY);
  document.getElementById("grid-major-y").setAttribute("d", paths.majorY);
})();
```
